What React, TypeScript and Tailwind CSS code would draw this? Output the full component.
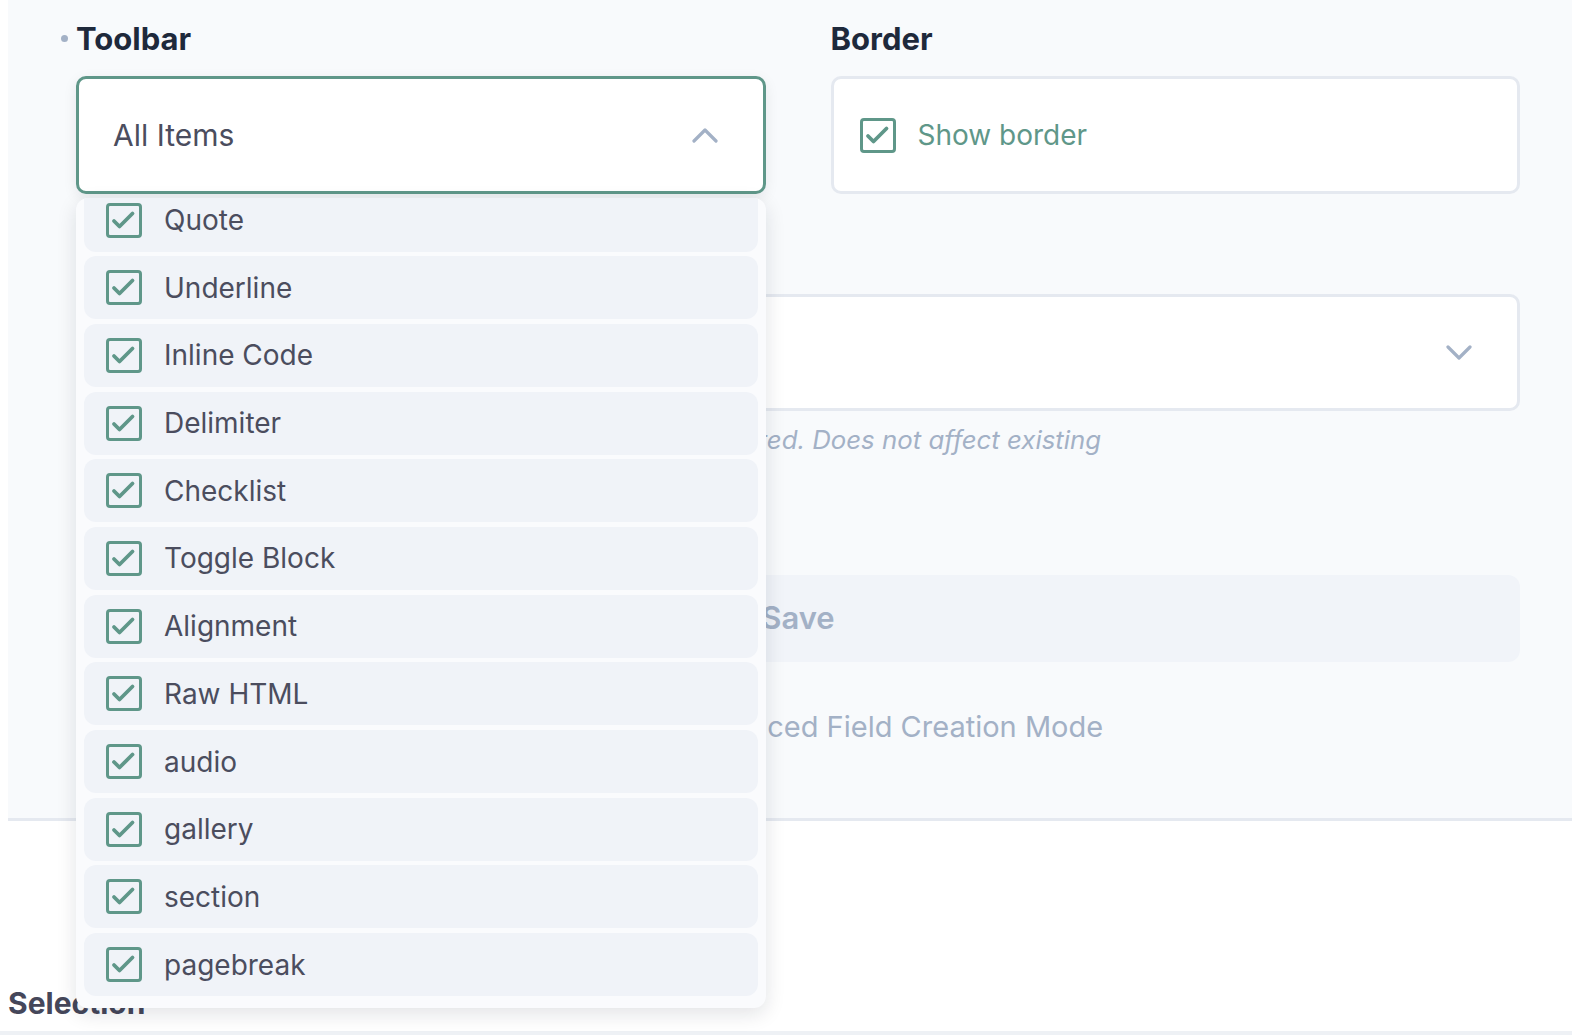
const ITEMS = [
  'Quote',
  'Underline',
  'Inline Code',
  'Delimiter',
  'Checklist',
  'Toggle Block',
  'Alignment',
  'Raw HTML',
  'audio',
  'gallery',
  'section',
  'pagebreak',
];

/** Checkbox cuadrado con borde verde */
function Check() {
  return (
    <span className="w-[36px] h-[35px] shrink-0 border-[3px] border-[#5f9789] rounded-[4px] flex items-center justify-center">
      <svg width="30" height="29" viewBox="0 0 30 29" fill="none">
        <path d="M5 15 L10.5 20.5 L23.5 7.5" stroke="#5f9789" strokeWidth="3.8" strokeLinecap="round" strokeLinejoin="round" />
      </svg>
    </span>
  );
}

function Chevron({ up }: { up?: boolean }) {
  return (
    <svg width="26" height="16" viewBox="0 0 26 16" fill="none">
      <path
        d={up ? 'M2 14 L13 3 L24 14' : 'M2 2 L13 13 L24 2'}
        stroke="#a3b1c6"
        strokeWidth="3.2"
        strokeLinecap="round"
        strokeLinejoin="round"
      />
    </svg>
  );
}

export default function App() {
  return (
    <div
      className="relative w-[1572px] h-[1036px] overflow-hidden bg-white"
      style={{ fontFamily: 'Inter, "Noto Sans", sans-serif' }}
    >
      {/* Panel de configuración */}
      <div className="ml-[8px] h-[821px] bg-[#f8fafc] border-b-[3px] border-[#e5e9f0] pl-[68px] pr-[52px] pt-[18px]">
        <div className="grid grid-cols-2 gap-x-[65px]">
          <div>
            <div className="relative flex items-center h-[40px]">
              <span className="absolute -left-[15px] top-[17px] w-[7px] h-[7px] rounded-full bg-[#a3b1c6]" />
              <h3 className="text-[31px] font-bold text-[#1e293b] leading-none">Toolbar</h3>
            </div>
            <div className="mt-[18px] h-[118px] bg-white border-[3px] border-[#5f9789] rounded-[10px] flex items-center justify-between pl-[34px] pr-[45px] shadow-[0_4px_14px_rgba(15,23,42,0.08)]">
              <span className="text-[30px] text-[#4b4d5e]">All Items</span>
              <Chevron up />
            </div>
          </div>
          <div>
            <div className="flex items-center h-[40px]">
              <h3 className="text-[31px] font-bold text-[#1e293b] leading-none">Border</h3>
            </div>
            <div className="mt-[18px] h-[118px] bg-white border-[3px] border-[#e5e9f0] rounded-[10px] flex items-center gap-[22px] pl-[26px]">
              <Check />
              <span className="text-[28px] text-[#5f9789]">Show border</span>
            </div>
          </div>
        </div>

        {/* Segundo selector (tapado por el menú) */}
        <div className="mt-[38px] h-[24px] text-[24px] text-[#4b4d5e] leading-none">Default State</div>
        <div className="mt-[38px] h-[117px] bg-white border-[3px] border-[#e5e9f0] rounded-[10px] flex items-center justify-end pr-[45px]">
          <Chevron />
        </div>
        <p className="mt-[16px] text-[25.8px] italic text-[#a3b1c6] leading-none">
          Sets which items are enabled when the field is first created. Does not affect existing
        </p>

        <button className="mt-[122px] w-full h-[87px] rounded-[12px] bg-[#f1f4f9] text-[31px] font-semibold text-[#a3b1c6]">
          Save
        </button>

        <p className="mt-[50px] text-center text-[29px] text-[#a3b1c6] leading-none">Switch to the Advanced Field Creation Mode</p>
      </div>

      <h2 className="ml-[8px] mt-[167px] text-[30px] font-bold text-[#45475a] leading-none">Selection</h2>
      <div className="mt-[13px] h-[4px] bg-[#eef1f5]" />

      {/* Menú desplegable */}
      <div className="absolute left-[76px] top-[198px] w-[690px] h-[810px] overflow-hidden rounded-[12px] bg-[#fafbfd] shadow-[0_6px_20px_rgba(15,23,42,0.12)]">
        <div className="-mt-[9.5px] flex flex-col gap-[4.7px] px-[8px]">
          {ITEMS.map(item => (
            <div key={item} className="h-[63px] rounded-[12px] bg-[#f0f3f8] flex items-center gap-[22px] pl-[22px]">
              <Check />
              <span className="text-[28px] text-[#4b4d5e]">{item}</span>
            </div>
          ))}
        </div>
      </div>
    </div>
  );
}
